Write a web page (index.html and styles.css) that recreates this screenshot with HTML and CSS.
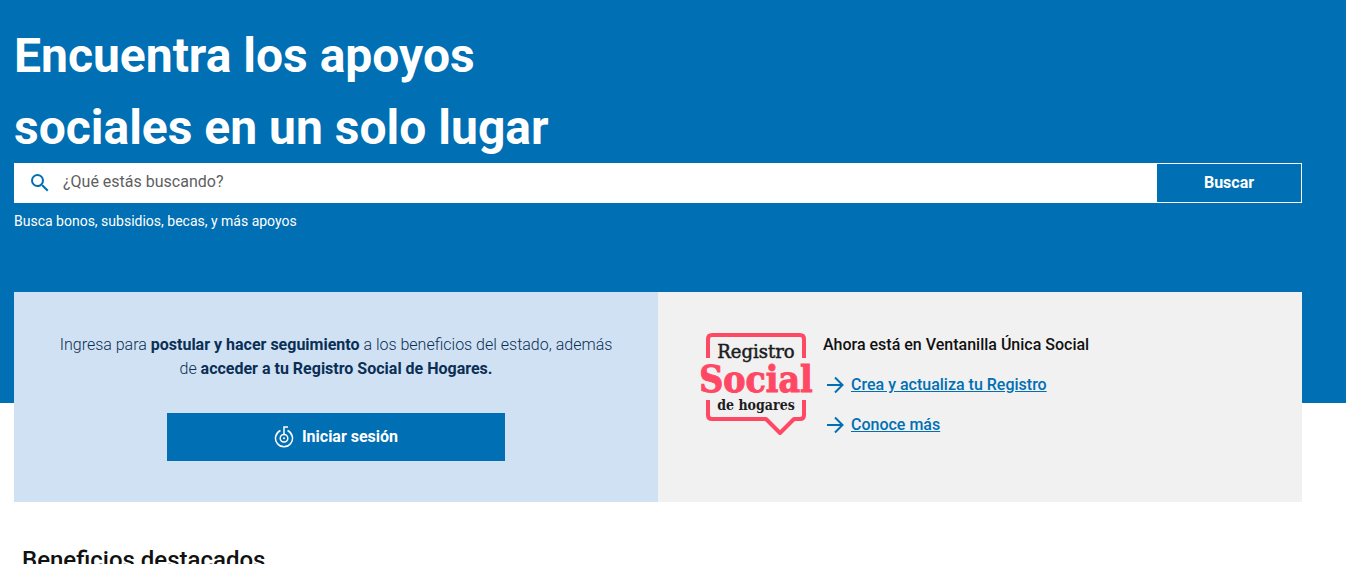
FILE: index.html
```html
<!DOCTYPE html>
<html lang="es">
<head>
<meta charset="utf-8">
<meta name="viewport" content="width=device-width, initial-scale=1">
<title>Ventanilla Única Social</title>
<link rel="stylesheet" href="styles.css">
</head>
<body>
<header class="hero">
  <h1 class="hero-title">Encuentra los apoyos<br>sociales en un solo lugar</h1>
  <form class="search">
    <label class="search-field">
      <svg class="search-icon" viewBox="0 0 24 24" aria-hidden="true"><path d="M15.5 14h-.79l-.28-.27A6.47 6.47 0 0 0 16 9.5 6.5 6.5 0 1 0 9.5 16c1.61 0 3.09-.59 4.23-1.57l.27.28v.79l5 4.99L20.49 19l-4.99-5zm-6 0a4.5 4.5 0 1 1 0-9 4.5 4.5 0 0 1 0 9z"/></svg>
      <input class="search-input" type="text" placeholder="¿Qué estás buscando?" aria-label="¿Qué estás buscando?">
    </label>
    <button class="search-button" type="submit">Buscar</button>
  </form>
  <p class="hint">Busca bonos, subsidios, becas, y más apoyos</p>
</header>
<main>
  <div class="panels">
    <section class="panel panel-login">
      <p class="login-text">Ingresa para <strong>postular y hacer seguimiento</strong> a los beneficios del estado, además de <strong>acceder a tu Registro Social de Hogares.</strong></p>
      <button class="login-button" type="button">
        <svg class="key-icon" viewBox="0 0 20 24" aria-hidden="true">
          <path d="M6.500 5.500A8.500 8.500 0 1 0 13.500 5.500"/>
          <circle cx="10" cy="13.300" r="3.800"/>
          <path d="M10 9.500V2H14"/>
          <circle class="dot" cx="10" cy="13.300" r="1"/>
        </svg>
        Iniciar sesión
      </button>
    </section>
    <section class="panel panel-registry">
      <svg class="logo" viewBox="0 0 118 104" role="img" aria-label="Registro Social de hogares">
        <path class="logo-frame" d="M9 25V6q0-4 4-4H101q4 0 4 4V25M9 67V82q0 4 4 4H67L81 100 95 86H101q4 0 4-4V67"/>
        <text class="logo-top" x="57" y="25">Registro</text>
        <text class="logo-mid" x="57" y="59">Social</text>
        <text class="logo-low" x="57" y="77">de hogares</text>
      </svg>
      <div class="registry-body">
        <p class="registry-title">Ahora está en Ventanilla Única Social</p>
        <ul class="links">
          <li class="link-row"><svg class="arrow" viewBox="0 0 24 24" aria-hidden="true"><path d="M4 12H19M12 4.500L19.500 12 12 19.500"/></svg><a href="#registro">Crea y actualiza tu Registro</a></li>
          <li class="link-row"><svg class="arrow" viewBox="0 0 24 24" aria-hidden="true"><path d="M4 12H19M12 4.500L19.500 12 12 19.500"/></svg><a href="#conoce">Conoce más</a></li>
        </ul>
      </div>
    </section>
  </div>
  <h2 class="featured">Beneficios destacados</h2>
</main>
</body>
</html>
```

FILE: styles.css
```css
* { box-sizing: border-box; }
body {
  margin: 0;
  background: #fff;
  color: #111;
  font: 400 16px/24px Roboto, sans-serif;
}
html { overflow: hidden; }
p, h1, h2, ul { margin: 0; padding: 0; }
button, input { font: inherit; }

.hero {
  padding: 20px 44px 170px 14px;
  background: #006fb3;
  color: #fff;
}
.hero-title { margin-bottom: -1px; font-size: 48px; line-height: 72px; font-weight: 700; }
.search {
  display: flex;
  height: 40px;
  border: 1px solid #fff;
}
.search-field {
  display: flex;
  flex: 1;
  align-items: center;
  gap: 11px;
  padding-left: 13px;
  background: #fff;
}
.search-icon { width: 24px; height: 24px; fill: #006fb3; }
.search-input {
  flex: 1;
  min-width: 0;
  padding: 0 0 2px;
  border: 0;
  outline: 0;
  background: none;
  color: #4a4a4a;
}
.search-input::placeholder { color: #606060; opacity: 1; }
.search-button {
  width: 144px;
  border: 0;
  background: #006fb3;
  color: #fff;
  font-weight: 700;
}
.hint { padding-top: 6px; font-size: 14px; }

.panels {
  display: grid;
  grid-template-columns: 1fr 1fr;
  margin: -111px 44px 0 14px;
}
.panel { padding: 41px; }
.panel-login {
  display: flex;
  flex-direction: column;
  align-items: center;
  gap: 32px;
  background: #d0e1f3;
  color: #0a2f55;
  text-align: center;
}
.login-text { font-weight: 300; }
.login-text strong { font-weight: 700; }
.login-button {
  display: flex;
  align-items: center;
  justify-content: center;
  gap: 8px;
  width: 60%;
  height: 48px;
  border: 0;
  background: #006fb3;
  color: #fff;
  font-weight: 700;
}
.key-icon { width: 20px; height: 24px; fill: none; stroke: #fff; stroke-width: 1.5; }
.key-icon .dot { fill: #fff; stroke: none; }

.panel-registry { display: flex; gap: 6px; background: #f1f1f1; }
.logo { width: 118px; height: 104px; overflow: visible; flex: none; }
.logo-frame { fill: none; stroke: #ff4864; stroke-width: 4; stroke-linejoin: round; }
.logo text { text-anchor: middle; fill: #1c1c1e; }
.logo .logo-top { font: 400 18px "DejaVu Serif", serif; stroke: #1c1c1e; stroke-width: 0.5; }
.logo .logo-mid { font: 700 37px "DejaVu Serif Condensed", "DejaVu Serif", serif; fill: #ff4864; stroke: #ff4864; stroke-width: 1; }
.logo .logo-low { font: 700 14px "DejaVu Serif Condensed", "DejaVu Serif", serif; }
.registry-title { font-weight: 500; }
.links { list-style: none; }
.link-row { display: flex; align-items: center; gap: 4px; padding-top: 16px; }
.link-row a { color: #006fb3; font-weight: 500; }
.arrow { width: 24px; height: 24px; fill: none; stroke: #006fb3; stroke-width: 2; }

.featured { padding: 40px 22px; font-size: 24px; line-height: 36px; font-weight: 500; }
```
